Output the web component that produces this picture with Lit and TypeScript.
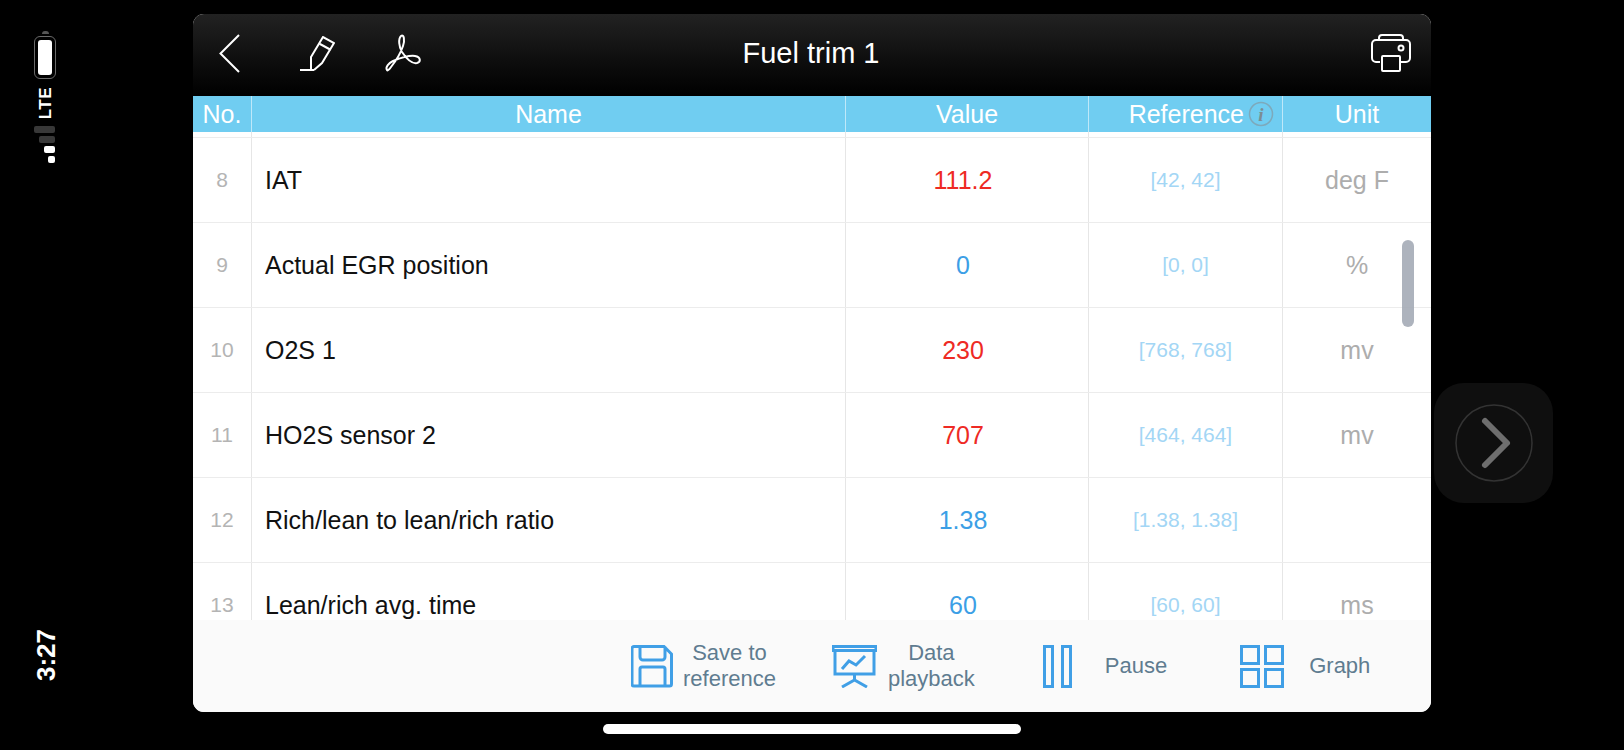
import { LitElement, css, html, svg } from "lit";
import { customElement } from "lit/decorators.js";

type Tone = "red" | "blue";

const rows: { no: number; name: string; value: string; tone: Tone; ref: string; unit: string }[] = [
  { no: 8, name: "IAT", value: "111.2", tone: "red", ref: "[42, 42]", unit: "deg F" },
  { no: 9, name: "Actual EGR position", value: "0", tone: "blue", ref: "[0, 0]", unit: "%" },
  { no: 10, name: "O2S 1", value: "230", tone: "red", ref: "[768, 768]", unit: "mv" },
  { no: 11, name: "HO2S sensor 2", value: "707", tone: "red", ref: "[464, 464]", unit: "mv" },
  { no: 12, name: "Rich/lean to lean/rich ratio", value: "1.38", tone: "blue", ref: "[1.38, 1.38]", unit: "" },
  { no: 13, name: "Lean/rich avg. time", value: "60", tone: "blue", ref: "[60, 60]", unit: "ms" },
];

const icons = {
  back: svg`<path d="M20 1 1.5 19.5 20 38" />`,
  pencil: svg`<path d="M0 34H14M11 34V21L23 1 34 7 22 27 14 34M20 8 31 14" />`,
  acrobat: svg`<path d="M3 36C1 33 5 29 9 27 14 25 25 21 31 22 37 23 37 28 33 29 28 30 22 24 18 18 15 13 14 5 17 2 20 0 21 6 19 12 17 18 11 28 7 33 5 36 3 37 3 36Z" />`,
  printer: svg`<path d="M9 28H5a4 4 0 0 1-4-4V10a4 4 0 0 1 4-4H35a4 4 0 0 1 4 4V24a4 4 0 0 1-4 4H30M8 6V4a3 3 0 0 1 3-3H29a3 3 0 0 1 3 3V6" /><rect x="11" y="22" width="18" height="15" rx="1" /><circle cx="30" cy="14" r="2.5" />`,
  save: svg`<path d="M3 1.5H33L40.5 9V39a2 2 0 0 1-2 2H3a2 2 0 0 1-2-2V3.500a2 2 0 0 1 2-2ZM9 1.500V12a3 3 0 0 0 3 3H31a3 3 0 0 0 3-3V1.500M9 41V24a2 2 0 0 1 2-2H32a2 2 0 0 1 2 2V41" />`,
  playback: svg`<path d="M1 1.500H44V5.500H1ZM3 5.500V29H42V5.500M10 24 17 16 24 20 33 11M22.500 29V35M10 42 22.500 35 35 42" />`,
  pause: svg`<rect x="1.500" y="1.500" width="8" height="40" /><rect x="19.500" y="1.500" width="8" height="40" />`,
  grid: svg`<rect x="1.500" y="1.500" width="17" height="17" /><rect x="25.500" y="1.500" width="17" height="17" /><rect x="1.500" y="24.500" width="17" height="17" /><rect x="25.500" y="24.500" width="17" height="17" />`,
};

const footerItems = [
  { key: "save", icon: icons.save, w: 42, label: ["Save to", "reference"] },
  { key: "playback", icon: icons.playback, w: 45, label: ["Data", "playback"] },
  { key: "pause", icon: icons.pause, w: 29, label: ["Pause"] },
  { key: "graph", icon: icons.grid, w: 44, label: ["Graph"] },
];

@customElement("app-root")
export class AppRoot extends LitElement {
  static styles = css`
    :host {
      display: grid;
      grid-template-columns: 193px 1238px 193px;
      height: 750px;
      overflow: hidden;
      background: #000;
      font-family: "Liberation Sans", Arial, sans-serif;
    }

    /* left status rail, rotated phone status bar */
    .status {
      display: flex;
      flex-direction: column;
      align-items: flex-start;
      padding: 31px 0 0 34px;
      color: #fff;
    }
    .battery {
      display: flex;
      flex-direction: column;
      align-items: center;
      width: 22px;
    }
    .battery-cap {
      width: 7px;
      height: 3px;
      margin-bottom: 2px;
      border-radius: 3px 3px 0 0;
      background: #555;
    }
    .battery-shell {
      box-sizing: border-box;
      width: 22px;
      height: 43px;
      padding: 3px;
      border: 1.500px solid #6a6a6a;
      border-radius: 6px;
    }
    .battery-fill {
      height: 100%;
      border-radius: 3px;
      background: #fff;
    }
    .lte {
      margin: 8px 0 0 4px;
      writing-mode: vertical-rl;
      transform: rotate(180deg);
      font-size: 17px;
      line-height: 15px;
      font-weight: 700;
      letter-spacing: 0.5px;
    }
    .signal {
      display: flex;
      flex-direction: column;
      align-items: flex-end;
      gap: 3px;
      width: 21px;
      margin-top: 7px;
    }
    .signal span {
      height: 7px;
      border-radius: 2px;
    }
    .signal .off {
      background: #383838;
    }
    .signal .on {
      background: #fff;
    }
    .time {
      margin: 466px 0 0 -1px;
      writing-mode: vertical-rl;
      transform: rotate(180deg);
      font-size: 26px;
      line-height: 26px;
      font-weight: 700;
    }

    /* main panel */
    .center {
      padding-top: 14px;
    }
    .panel {
      display: flex;
      flex-direction: column;
      position: relative;
      height: 698px;
      overflow: hidden;
      border-radius: 11px;
      background: #fff;
    }
    .topbar {
      display: flex;
      align-items: center;
      position: relative;
      flex: none;
      height: 82px;
      padding: 0 20px 4px 26px;
      box-sizing: border-box;
      background: linear-gradient(#222, #0b0b0b 65%, #000);
    }
    .topbar svg {
      fill: none;
      stroke: #fff;
      stroke-width: 2;
    }
    .topbar .back {
      margin-right: 60px;
    }
    .topbar .pencil {
      margin-right: 49px;
    }
    .topbar .printer {
      margin-left: auto;
    }
    .title {
      position: absolute;
      left: 0;
      right: 2px;
      top: 20px;
      text-align: center;
      color: #fff;
      font-size: 29px;
      line-height: 38px;
    }

    .cols {
      display: grid;
      grid-template-columns: 59px 594px 243px 194px 148px;
    }
    .head {
      flex: none;
      height: 36px;
      background: #70cdf1;
      color: #fff;
      font-size: 25px;
      line-height: 36px;
      text-align: center;
    }
    .head > div {
      box-sizing: border-box;
      border-right: 1px solid rgba(255, 255, 255, 0.55);
    }
    .head > div:last-child {
      border-right: 0;
    }
    .head .ref {
      display: flex;
      align-items: center;
      justify-content: flex-end;
      gap: 4px;
      padding-right: 8px;
    }
    .info {
      flex: none;
    }
    .info circle {
      fill: none;
      stroke: #7da9bb;
      stroke-width: 1.500;
    }
    .info text {
      fill: #7b8d94;
      font-family: "Liberation Serif", serif;
      font-size: 19px;
      font-style: italic;
      font-weight: 700;
    }

    .body {
      flex: 1;
      min-height: 0;
      overflow: hidden;
    }
    .strip {
      height: 6px;
      box-sizing: border-box;
      border-bottom: 1px solid #ececec;
    }
    .strip > div {
      box-sizing: border-box;
      border-right: 1px solid #e6e6e6;
    }
    .strip > div:last-child {
      border-right: 0;
    }
    .row {
      height: 85px;
      box-sizing: border-box;
      border-bottom: 1px solid #ececec;
    }
    .row > div {
      display: flex;
      align-items: center;
      justify-content: center;
      box-sizing: border-box;
      border-right: 1px solid #e6e6e6;
    }
    .row > div:last-child {
      border-right: 0;
    }
    .row .no {
      color: #b4b4b4;
      font-size: 21px;
    }
    .row .name {
      justify-content: flex-start;
      padding-left: 13px;
      color: #111;
      font-size: 25px;
    }
    .row .value {
      font-size: 25px;
      padding-right: 8px;
    }
    .row .value.red {
      color: #ee2a24;
    }
    .row .value.blue {
      color: #3c9fe6;
    }
    .row .refval {
      color: #a3d6f5;
      font-size: 21px;
    }
    .row .unit {
      color: #adadad;
      font-size: 25px;
    }

    .scrollbar {
      position: absolute;
      left: 1209px;
      top: 226px;
      width: 12px;
      height: 87px;
      border-radius: 6px;
      background: rgba(160, 166, 178, 0.86);
    }

    .footer {
      display: flex;
      align-items: center;
      flex: none;
      height: 92px;
      padding-left: 438px;
      box-sizing: border-box;
      background: #fafafa;
      color: #5f7c90;
      font-size: 22px;
      line-height: 26px;
      text-align: center;
    }
    .tool {
      display: flex;
      align-items: center;
    }
    .tool svg {
      flex: none;
      fill: none;
      stroke: #409fe6;
      stroke-width: 3;
    }
    .tool.save {
      gap: 10px;
      margin-right: 56px;
    }
    .tool.playback {
      gap: 11px;
      margin-right: 68px;
    }
    .tool.pause {
      gap: 33px;
      margin-right: 73px;
    }
    .tool.graph {
      gap: 25px;
    }

    .home {
      width: 418px;
      height: 10px;
      margin: 12px 0 0 410px;
      border-radius: 5px;
      background: #fff;
    }

    /* right rail */
    .next {
      padding: 383px 0 0 3px;
    }
    .next-box {
      display: flex;
      align-items: center;
      justify-content: center;
      width: 119px;
      height: 120px;
      border-radius: 30px;
      background: #0f0f0f;
    }
    .next-box svg {
      fill: none;
    }
  `;

  render() {
    return html`
      <aside class="status">
        <div class="battery">
          <div class="battery-cap"></div>
          <div class="battery-shell"><div class="battery-fill"></div></div>
        </div>
        <div class="lte">LTE</div>
        <div class="signal">
          <span class="off" style="width:21px"></span>
          <span class="off" style="width:16px"></span>
          <span class="on" style="width:11px"></span>
          <span class="on" style="width:7px"></span>
        </div>
        <div class="time">3:27</div>
      </aside>

      <main class="center">
        <section class="panel">
          <header class="topbar">
            <svg class="back" width="21" height="39" viewBox="0 0 21 39">${icons.back}</svg>
            <svg class="pencil" width="35" height="35" viewBox="0 0 35 35">${icons.pencil}</svg>
            <svg class="acrobat" width="38" height="38" viewBox="0 0 38 38">${icons.acrobat}</svg>
            <div class="title">Fuel trim 1</div>
            <svg class="printer" width="40" height="39" viewBox="0 0 40 39">${icons.printer}</svg>
          </header>

          <div class="head cols">
            <div>No.</div>
            <div>Name</div>
            <div>Value</div>
            <div class="ref">
              Reference
              <svg class="info" width="26" height="26" viewBox="0 0 26 26">
                <circle cx="13" cy="13" r="11.500"></circle>
                <text x="13" y="19.500" text-anchor="middle">i</text>
              </svg>
            </div>
            <div>Unit</div>
          </div>

          <div class="body">
            <div class="strip cols"><div></div><div></div><div></div><div></div><div></div></div>
            ${rows.map(
              (r) => html`
                <div class="row cols">
                  <div class="no">${r.no}</div>
                  <div class="name">${r.name}</div>
                  <div class="value ${r.tone}">${r.value}</div>
                  <div class="refval">${r.ref}</div>
                  <div class="unit">${r.unit}</div>
                </div>
              `,
            )}
          </div>

          <div class="scrollbar"></div>

          <footer class="footer">
            ${footerItems.map(
              (t) => html`
                <div class="tool ${t.key}">
                  <svg width=${t.w} height="43" viewBox="0 0 ${t.w} 43">${t.icon}</svg>
                  <div>${t.label.map((l) => html`<div>${l}</div>`)}</div>
                </div>
              `,
            )}
          </footer>
        </section>
        <div class="home"></div>
      </main>

      <aside class="next">
        <div class="next-box">
          <svg width="78" height="78" viewBox="0 0 78 78">
            <circle cx="39" cy="39" r="38" stroke="#333" stroke-width="1.500"></circle>
            <path d="M30 17 52 39 30 61" stroke="#6e6e6e" stroke-width="6" stroke-linecap="round" stroke-linejoin="round"></path>
          </svg>
        </div>
      </aside>
    `;
  }
}

declare global {
  interface HTMLElementTagNameMap {
    "app-root": AppRoot;
  }
}
